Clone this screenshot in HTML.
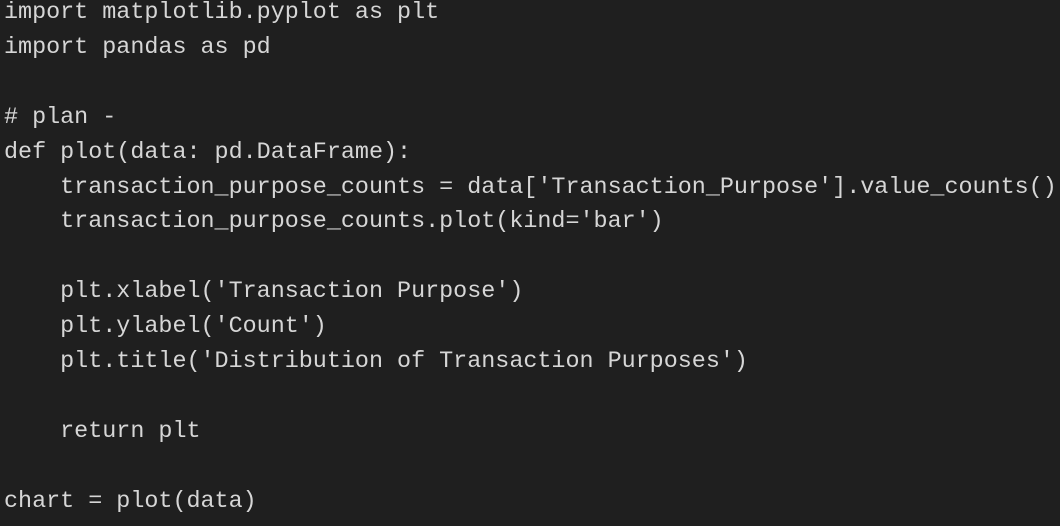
<!DOCTYPE html>
<html><head><style>
html,body{margin:0;padding:0;background:#1f1f1f;width:1060px;height:526px;overflow:hidden}
pre{margin:0;position:absolute;left:4px;top:-4px;font-family:"Liberation Mono","DejaVu Sans Mono",monospace;font-size:23.4px;line-height:34.9px;color:#d6d6d6;white-space:pre}
</style></head><body><pre>import matplotlib.pyplot as plt
import pandas as pd

# plan -
def plot(data: pd.DataFrame):
    transaction_purpose_counts = data['Transaction_Purpose'].value_counts()
    transaction_purpose_counts.plot(kind='bar')

    plt.xlabel('Transaction Purpose')
    plt.ylabel('Count')
    plt.title('Distribution of Transaction Purposes')

    return plt

chart = plot(data)</pre></body></html>
